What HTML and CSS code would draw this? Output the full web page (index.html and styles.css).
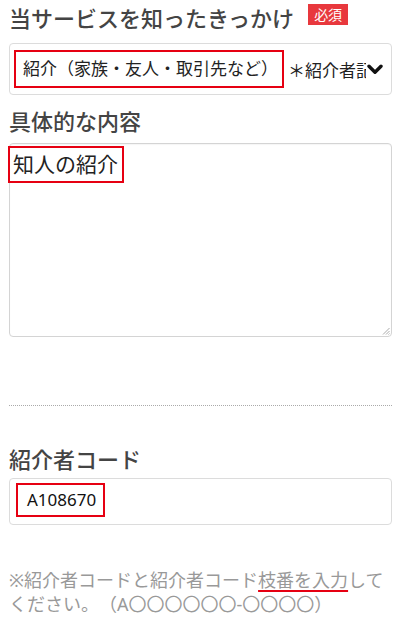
FILE: index.html
```html
<!DOCTYPE html>
<html lang="ja">
<head>
<meta charset="utf-8">
<link rel="stylesheet" href="styles.css">
</head>
<body>
<div class="form">
  <div class="field">
    <div class="label label-first">
      <span>当サービスを知ったきっかけ</span>
      <span class="badge">必須</span>
    </div>
    <div class="select">
      <div class="select-text"><span class="mark mark-select">紹介（家族・友人・取引先など）</span><span class="rest">＊紹介者記入欄</span></div>
      <svg class="chev" width="16" height="11" viewBox="0 0 16 11"><path d="M2 2.2 L8 8.2 L14 2.2" fill="none" stroke="#111" stroke-width="3.4" stroke-linecap="round" stroke-linejoin="round"/></svg>
    </div>
  </div>

  <div class="field">
    <div class="label label-second">具体的な内容</div>
    <div class="textarea">
      <span class="mark mark-area">知人の紹介</span>
      <svg class="grip" width="8" height="8" viewBox="0 0 8 8"><path d="M7.5 1 L1 7.5 M7.5 4 L4 7.5 M7.5 6.5 L6.5 7.5" stroke="#aaa" stroke-width="1"/></svg>
    </div>
  </div>

  <div class="divider"></div>

  <div class="field">
    <div class="label label-third">紹介者コード</div>
    <div class="input">
      <span class="mark mark-input">A108670</span>
    </div>
  </div>

  <p class="note">※紹介者コードと紹介者コード<span class="uline">枝番を入力</span>してください。（A〇〇〇〇〇〇-〇〇〇〇）</p>
</div>
</body>
</html>
```

FILE: styles.css
```css
* { box-sizing: border-box; }
html, body { margin: 0; padding: 0; background: #fff; }
body {
  font-family: "Noto Sans", "Noto Sans CJK JP", sans-serif;
  color: #333;
  text-spacing-trim: space-all;
}
.form {
  padding: 0 8px 0 9px;
  display: flex;
  flex-direction: column;
}
.label {
  font-size: 22px;
  line-height: 30px;
  height: 30px;
  color: #444;
  font-weight: 500;
  display: flex;
  align-items: flex-start;
}
.label-first { margin-top: 3px; }
.badge {
  background: #e8383d;
  color: #fff;
  font-size: 14px;
  font-weight: 400;
  line-height: 21px;
  padding: 0 6px;
  margin-left: 14px;
  margin-top: 1px;
}
.select {
  margin-top: 10px;
  height: 52px;
  border: 1px solid #dcdcdc;
  border-radius: 4px;
  display: flex;
  align-items: center;
  padding-left: 4px;
  padding-right: 8px;
}
.select-text {
  flex: 1;
  overflow: hidden;
  white-space: nowrap;
  font-size: 17px;
  color: #222;
  display: flex;
  align-items: center;
  margin-right: 1px;
}
.mark {
  border: 2px solid #e60012;
  display: inline-block;
  flex-shrink: 0;
}
.mark-select {
  height: 38px;
  line-height: 34px;
  padding: 0 4px 0 7px;
}
.rest { margin-left: 4px; }
.chev { flex-shrink: 0; display: block; }
.label-second { margin-top: 11px; }
.textarea {
  position: relative;
  margin-top: 7px;
  height: 194px;
  border: 1px solid #d4d4d4;
  border-radius: 4px;
  box-shadow: inset 0 1px 1px rgba(0,0,0,0.04);
}
.mark-area {
  margin: 2px 0 0 -2px;
  font-size: 21px;
  line-height: 33px;
  padding: 0 4px 0 3px;
  color: #222;
}
.grip { position: absolute; right: 1px; bottom: 1px; }
.divider {
  margin-top: 68px;
  border-top: 1px dotted #aaa;
}
.label-third { margin-top: 38px; }
.input {
  margin-top: 4px;
  height: 47px;
  border: 1px solid #dcdcdc;
  border-radius: 4px;
  padding: 4px 0 0 6px;
}
.mark-input {
  height: 34px;
  line-height: 30px;
  font-size: 17px;
  padding: 0 7px 0 9px;
  color: #111;
}
.note {
  margin: 43px 0 0;
  font-size: 18px;
  line-height: 24px;
  color: #999;
}
.uline {
  text-decoration: underline;
  text-decoration-color: #e60012;
  text-decoration-thickness: 2px;
  text-underline-offset: 3px;
}
```
